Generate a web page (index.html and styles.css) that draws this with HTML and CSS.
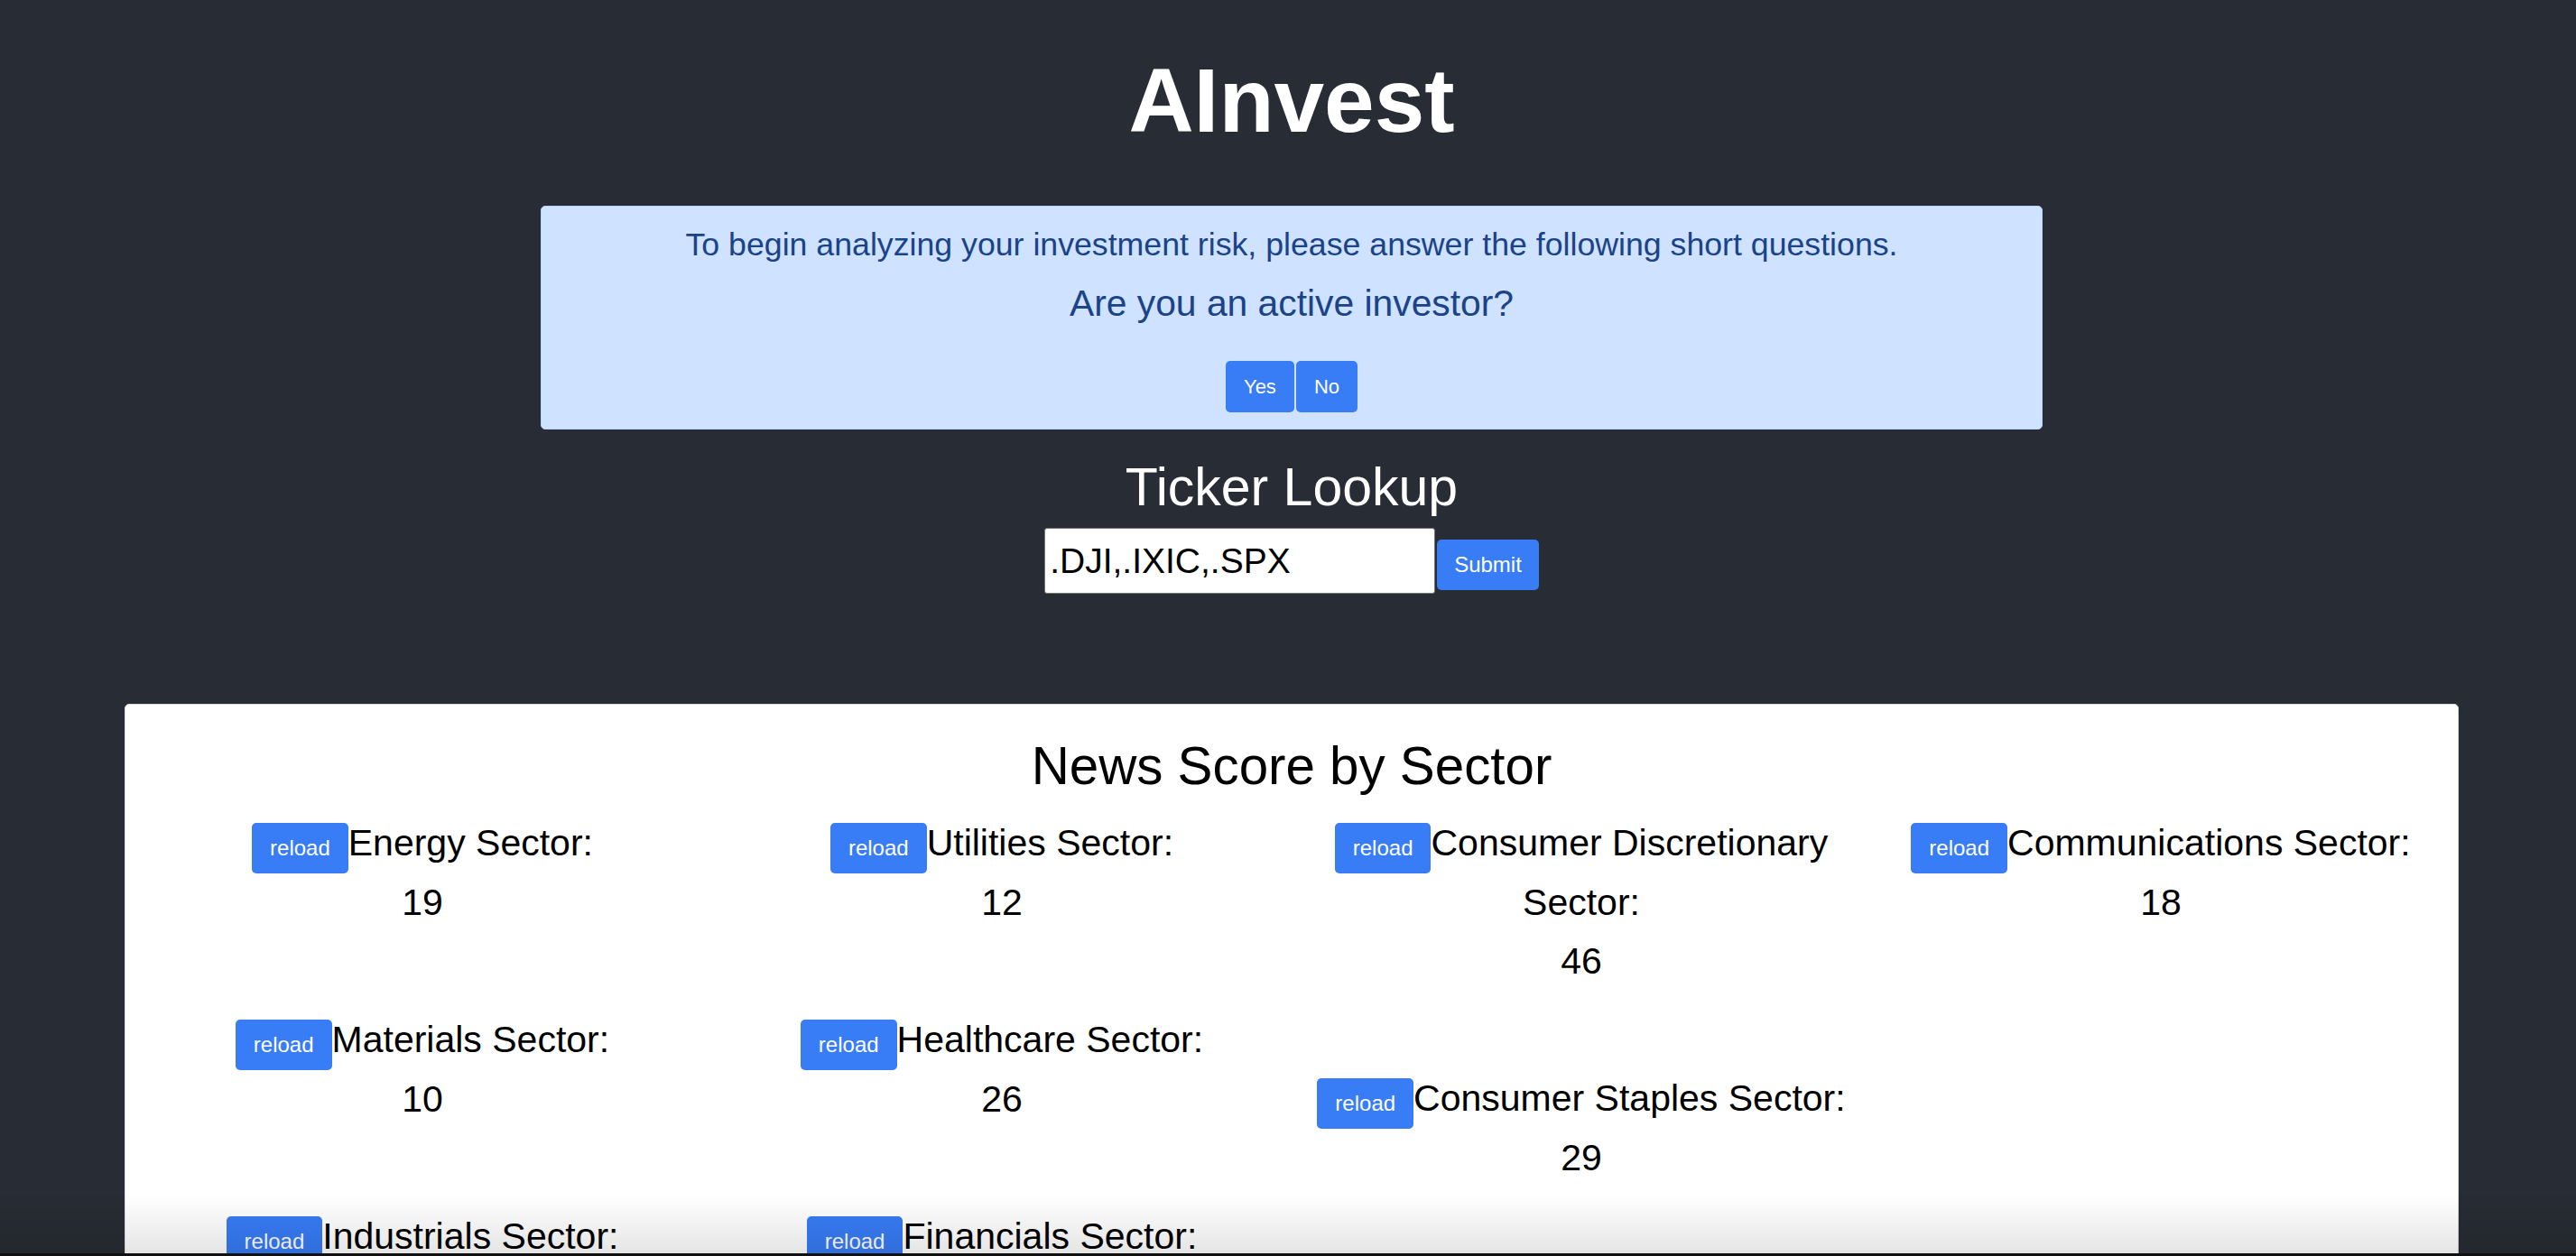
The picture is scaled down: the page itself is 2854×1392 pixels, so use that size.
FILE: index.html
```html
<!DOCTYPE html>
<html lang="en">
<head>
<meta charset="utf-8">
<title>AInvest</title>
<link rel="stylesheet" href="styles.css">
</head>
<body>
<div class="page">
  <header class="header">
    <h1 class="brand">AInvest</h1>
    <div class="alert">
      <p class="alert-intro">To begin analyzing your investment risk, please answer the following short questions.</p>
      <p class="alert-question">Are you an active investor?</p>
      <div class="answer-group">
        <button class="btn btn-answer">Yes</button>
        <button class="btn btn-answer">No</button>
      </div>
    </div>
    <h2 class="lookup-title">Ticker Lookup</h2>
    <form class="lookup-form">
      <input class="lookup-input" type="text" value=".DJI,.IXIC,.SPX">
      <button class="btn btn-submit" type="button">Submit</button>
    </form>
  </header>

  <section class="card">
    <h2 class="card-title">News Score by Sector</h2>
    <div class="sector-grid">
      <div class="sector-col">
        <div class="sector"><button class="btn btn-reload">reload</button>Energy Sector:<br>19</div>
        <div class="sector"><button class="btn btn-reload">reload</button>Materials Sector:<br>10</div>
        <div class="sector"><button class="btn btn-reload">reload</button>Industrials Sector:</div>
      </div>
      <div class="sector-col">
        <div class="sector"><button class="btn btn-reload">reload</button>Utilities Sector:<br>12</div>
        <div class="sector"><button class="btn btn-reload">reload</button>Healthcare Sector:<br>26</div>
        <div class="sector"><button class="btn btn-reload">reload</button>Financials Sector:</div>
      </div>
      <div class="sector-col">
        <div class="sector"><button class="btn btn-reload">reload</button>Consumer Discretionary Sector:<br>46</div>
        <div class="sector"><button class="btn btn-reload">reload</button>Consumer Staples Sector:<br>29</div>
      </div>
      <div class="sector-col">
        <div class="sector"><button class="btn btn-reload">reload</button>Communications Sector:<br>18</div>
      </div>
    </div>
  </section>
</div>
<div class="window-edge"></div>
</body>
</html>
```

FILE: styles.css
```css
html, body {
  margin: 0;
  padding: 0;
  height: 100%;
  overflow: hidden;
}

body {
  background: #282c34;
  font-family: "Liberation Sans", Arial, sans-serif;
  color: #ffffff;
}

.page {
  padding-left: 8px;
}

.header {
  display: flex;
  flex-direction: column;
  align-items: center;
  padding-top: 54px;
}

.brand {
  margin: 0;
  font-size: 100px;
  font-weight: 700;
  line-height: normal;
  color: #ffffff;
}

.alert {
  box-sizing: border-box;
  width: 1664px;
  margin-top: 59px;
  padding: 22px 20px 18px;
  background: #cfe2ff;
  border: 1px solid #b6d4fe;
  border-radius: 5px;
  color: #1a4388;
  text-align: center;
}

.alert-intro {
  margin: 0;
  font-size: 35.7px;
  line-height: normal;
}

.alert-question {
  margin: 21px 0 0;
  font-size: 40.8px;
  line-height: normal;
}

.answer-group {
  display: flex;
  justify-content: center;
  gap: 2px;
  margin-top: 40px;
}

.btn {
  font-family: "Liberation Sans", Arial, sans-serif;
  color: #ffffff;
  background: #387cf6;
  border: 0;
  border-radius: 5px;
  cursor: pointer;
}

.btn-answer {
  font-size: 22px;
  line-height: 33px;
  padding: 12px 20px;
}

.lookup-title {
  margin: 30px 0 0;
  font-size: 59px;
  font-weight: 400;
  line-height: normal;
  color: #ffffff;
}

.lookup-form {
  display: flex;
  align-items: flex-start;
  gap: 2px;
  margin-top: 11px;
}

.lookup-input {
  box-sizing: border-box;
  width: 433px;
  height: 73px;
  padding: 0 5px;
  border: 1px solid #767676;
  border-radius: 3px;
  background: #ffffff;
  font-family: "Liberation Sans", Arial, sans-serif;
  font-size: 39px;
  color: #000000;
}

.btn-submit {
  margin-top: 13px;
  font-size: 24px;
  line-height: 36px;
  padding: 10px 19px;
}

.card {
  box-sizing: border-box;
  margin: 122px 130px 0;
  padding: 34px 8px 0;
  background: #ffffff;
  border: 1px solid #dcdcdc;
  border-radius: 5px;
  color: #000000;
  height: 800px;
}

.card-title {
  margin: 0;
  text-align: center;
  font-size: 58.3px;
  font-weight: 400;
  line-height: normal;
}

.sector-grid {
  display: grid;
  grid-template-columns: repeat(4, 1fr);
  margin-top: 20px;
}

.sector-col {
  display: flex;
  flex-direction: column;
}

.sector {
  text-align: center;
  font-size: 41px;
  line-height: 65px;
  margin-bottom: 87px;
}

.btn-reload {
  font-size: 24px;
  line-height: 36px;
  padding: 10px 20px;
  vertical-align: baseline;
}

.window-edge {
  position: fixed;
  left: 0;
  right: 0;
  bottom: 0;
  height: 64px;
  background: linear-gradient(to bottom, rgba(0, 0, 0, 0) 0%, rgba(0, 0, 0, 0.1) 100%);
  border-bottom: 3px solid #111111;
  pointer-events: none;
}
```
